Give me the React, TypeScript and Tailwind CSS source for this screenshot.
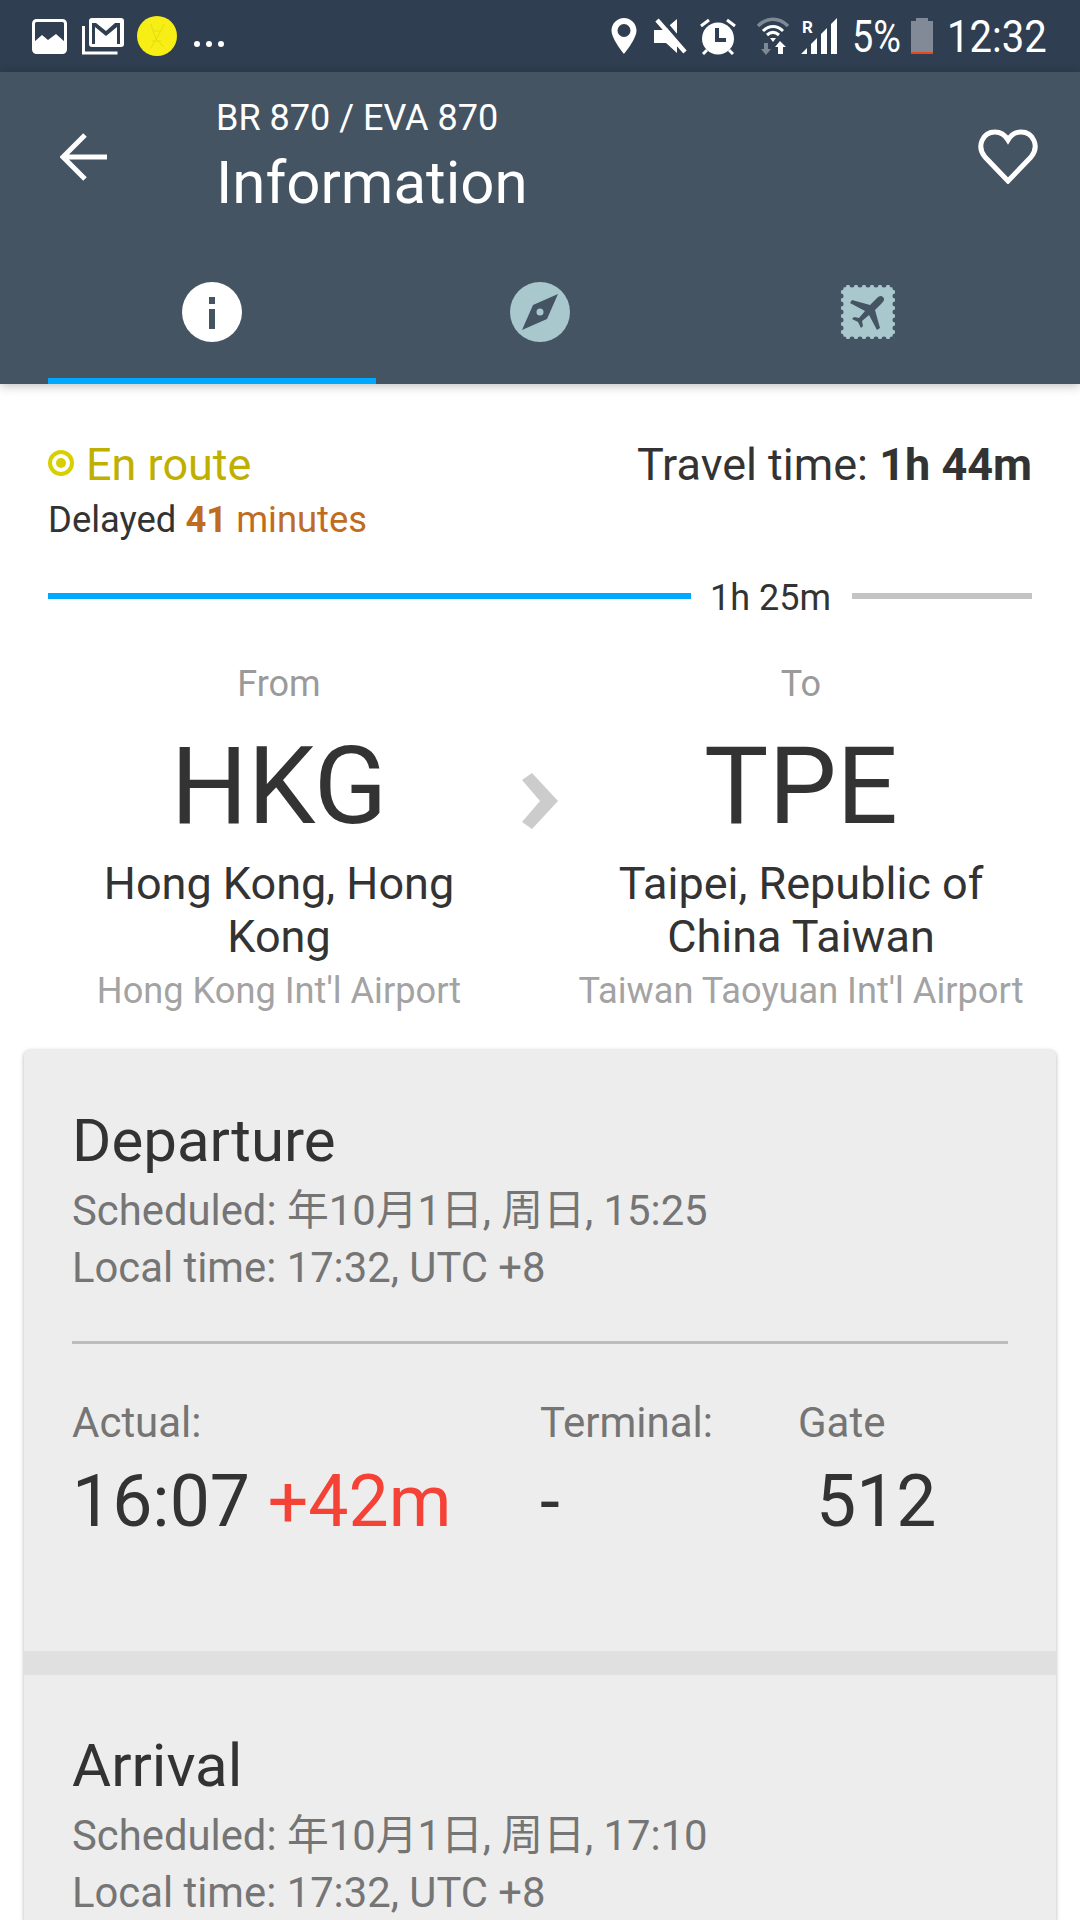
import { ReactNode } from 'react';

const ImageIcon = () => (
    <svg width="35" height="35" viewBox="0 0 35 35">
        <rect x="1.5" y="1.5" width="32" height="32" rx="3" fill="none" stroke="white" strokeWidth="3" />
        <path d="M2 34V23l8-7 6 5 8-6 9 8v11z" fill="white" />
    </svg>
);

const GmailStack = () => (
    <svg width="42" height="37" viewBox="0 0 42 37">
        <path d="M1.500 8v27h34" fill="none" stroke="white" strokeWidth="3" />
        <rect x="7" y="0" width="35" height="29" rx="3" fill="white" />
        <path d="M10 5v21h3V9l11 9 11-9v17h3V5h-5L24 13 14 5z" fill="#2f3e50" />
    </svg>
);

const Coin = () => (
    <svg width="40" height="40" viewBox="0 0 40 40">
        <circle cx="20" cy="20" r="20" fill="#f7ee16" />
        <path d="M14 8l2 7h8l3-7M16 15l3 8-5 9M24 15l-5 8 8 8M15 25h9" fill="none" stroke="#e6dc14" strokeWidth="1" />
    </svg>
);

const Pin = () => (
    <svg width="26" height="36" viewBox="0 0 25 36">
        <path fillRule="evenodd" d="M12.5 0C5.6 0 0 5.6 0 12.5 0 21 12.5 36 12.5 36S25 21 25 12.5C25 5.6 19.4 0 12.5 0zm0 6a6.5 6.5 0 1 1 0 13 6.500 6.500 0 0 1 0-13z" fill="white" />
    </svg>
);

const Mute = () => (
    <svg width="33" height="36" viewBox="0 0 33 36">
        <path d="M0 12h10L23 1v34L12 25H0z" fill="white" />
        <path d="M7 0l28 33" stroke="#2f3e50" strokeWidth="4" />
        <path d="M3 2l28 32" stroke="white" strokeWidth="4.500" />
    </svg>
);

const Alarm = () => (
    <svg width="36" height="37" viewBox="0 0 36 37">
        <circle cx="18" cy="20.500" r="16" fill="white" />
        <path d="M15 10h4v10h7v4H15z" fill="#2f3e50" />
        <path d="M1 8l8-6M35 8l-8-6M3 36l4-4M33 36l-4-4" stroke="white" strokeWidth="3" />
    </svg>
);

const Wifi = () => (
    <svg width="32" height="38" viewBox="0 0 32 38">
        <path d="M1 9C10 0 22 0 31 9" fill="none" stroke="#7f8995" strokeWidth="3.500" />
        <path d="M6 14c6-6 14-6 20 0M10 18c4-3.500 8-3.500 12 0" fill="none" stroke="white" strokeWidth="3" />
        <path d="M13 21h6l-3 4z" fill="white" />
        <path d="M7 26h4v6h3l-5 6-5-6h3z" fill="#7f8995" />
        <path d="M23 24l6 6h-3v7h-5v-7h-3z" fill="white" />
    </svg>
);

const Signal = () => (
    <svg width="36" height="37" viewBox="0 0 36 37">
        <path d="M0 36l6-6v6zM10 36V26l6-6v16zM20 36V16l6-6v26zM30 36V6l6-6v36z" fill="white" />
    </svg>
);

const Battery = () => (
    <div className="flex flex-col items-center w-[22px] h-[36px]">
        <div className="w-[12px] h-[3px] bg-[#828a97]" />
        <div className="w-[22px] flex-1 bg-[#828a97]" />
        <div className="w-[22px] h-[2px] bg-[#e8481c]" />
    </div>
);

const BackArrow = () => (
    <svg width="48" height="48" viewBox="0 0 48 48">
        <path d="M47 24H3M25 2L3 24l22 22" fill="none" stroke="white" strokeWidth="5" />
    </svg>
);

const Heart = () => (
    <svg width="60" height="55" viewBox="0 0 60 55">
        <path d="M30 52L7 28C-2 17 5 3 17 3c6 0 10 3 13 8 3-5 7-8 13-8 12 0 19 14 10 25z" fill="none" stroke="white" strokeWidth="5" />
    </svg>
);

const InfoTab = () => (
    <svg width="60" height="60" viewBox="0 0 60 60">
        <circle cx="30" cy="30" r="30" fill="white" />
        <path d="M27 15h6v7h-6zM27 27h6v20h-6z" fill="#445463" />
    </svg>
);

const CompassTab = () => (
    <svg width="60" height="60" viewBox="0 0 60 60">
        <circle cx="30" cy="30" r="30" fill="#a9c8cd" />
        <path fillRule="evenodd" d="M48 12L37 37 12 48l11-25zM30 26.500a3.500 3.500 0 1 0 0 7 3.500 3.500 0 0 0 0-7z" fill="#445463" />
    </svg>
);

const StampTab = () => (
    <svg width="54" height="54" viewBox="0 0 54 54">
        <rect width="54" height="54" rx="2" fill="#a9c8cd" />
        <g fill="#445463">
            {[0, 1, 2, 3, 4, 5, 6].map((i) => (
                <g key={i}>
                    <circle cx={3 + i * 8} cy="0" r="2.500" />
                    <circle cx={3 + i * 8} cy="54" r="2.500" />
                    <circle cx="0" cy={3 + i * 8} r="2.500" />
                    <circle cx="54" cy={3 + i * 8} r="2.500" />
                </g>
            ))}
        </g>
        <path d="M42 12c-2-2-4-1-6 1l-7 7-18-5-2 3 15 8-6 7-5-1-2 2 6 3 3 6 2-2-1-5 7-6 8 15 3-2-5-18 7-7c2-2 3-4 1-6z" fill="#445463" />
    </svg>
);

const StatusBar = () => (
    <div className="h-[72px] bg-[#2f3e50] flex items-center pl-[32px] pr-[35px] text-white">
        <ImageIcon />
        <div className="ml-[15px]"><GmailStack /></div>
        <div className="ml-[13px]"><Coin /></div>
        <div className="ml-[17px] mt-[16px] flex gap-[6px]">
            <span className="w-[6px] h-[6px] rounded-full bg-white" />
            <span className="w-[6px] h-[6px] rounded-full bg-white" />
            <span className="w-[6px] h-[6px] rounded-full bg-white" />
        </div>
        <div className="ml-auto flex items-center">
            <Pin />
            <div className="ml-[17px]"><Mute /></div>
            <div className="ml-[13px]"><Alarm /></div>
            <div className="ml-[21px]"><Wifi /></div>
            <div className="ml-[12px] relative">
                <Signal />
                <span className="absolute left-[1px] top-[-1px] text-[17px] font-bold leading-[20px]">R</span>
            </div>
            <span className="ml-[15px] w-[49px] text-[44px] leading-[48px] whitespace-nowrap scale-x-[0.86] origin-left translate-y-[1px]">5%</span>
            <div className="ml-[10px]"><Battery /></div>
            <span className="ml-[14px] w-[98px] text-[45px] leading-[48px] whitespace-nowrap scale-x-[0.89] origin-left translate-y-[1px]">12:32</span>
        </div>
    </div>
);

const Header = () => (
    <div className="relative z-10 h-[312px] bg-[#445463] flex flex-col shadow-[0_2px_10px_rgba(0,0,0,0.25)] text-white">
        <div className="flex pl-[60px] pr-[42px] pt-[24px]">
            <div className="mt-[37px]"><BackArrow /></div>
            <div className="ml-[108px] flex flex-col">
                <span className="text-[36px] leading-[44px]">BR 870 / EVA 870</span>
                <span className="mt-[7px] text-[60px] leading-[72px]">Information</span>
            </div>
            <div className="ml-auto mt-[33px]"><Heart /></div>
        </div>
        <div className="mt-auto mx-12 flex h-[134px]">
            <div className="flex-1 flex items-center justify-center border-b-[6px] border-[#00a8ff] pb-[4px]">
                <InfoTab />
            </div>
            <div className="flex-1 flex items-center justify-center pb-[10px]">
                <CompassTab />
            </div>
            <div className="flex-1 flex items-center justify-center pb-[10px]">
                <StampTab />
            </div>
        </div>
    </div>
);

const Airport = ({ label, code, city, name }: { label: string; code: string; city: ReactNode; name: string }) => (
    <div className="w-[462px] flex flex-col items-center text-center">
        <span className="text-[36px] leading-[40px] text-[#9a9a9a]">{label}</span>
        <span className="mt-[18px] text-[108px] leading-[128px] text-[#333333]">{code}</span>
        <span className="mt-[7px] text-[45px] leading-[53px] text-[#333333]">{city}</span>
        <span className="mt-[8px] text-[36.2px] leading-[40px] text-[#a3a3a3] whitespace-nowrap">{name}</span>
    </div>
);

const Times = ({ title, time }: { title: string; time: string }) => (
    <>
        <div className="text-[60px] leading-[68px] text-[#333333]">{title}</div>
        <div className="mt-[7px] text-[41.8px] leading-[57px] text-[#757575]">Scheduled: 年10月1日, 周日, {time}</div>
        <div className="text-[41.8px] leading-[57px] text-[#757575]">Local time: 17:32, UTC +8</div>
    </>
);

export default function App() {
    return (
        <div className="h-[1920px] w-[1080px] overflow-hidden bg-white font-['Roboto','Noto_Sans_CJK_SC',sans-serif]">
            <StatusBar />
            <Header />

            {/* Status and route */}
            <div className="px-12 pt-[56px]">
                <div className="flex justify-between">
                    <div className="flex items-center">
                        <span className="w-[26px] h-[26px] rounded-full border-[4px] border-[#d8cf00] flex items-center justify-center mt-[-4px]">
                            <span className="w-[10px] h-[10px] rounded-full bg-[#d8cf00]" />
                        </span>
                        <span className="ml-[12px] text-[45px] leading-[50px] text-[#bfb000]">En route</span>
                    </div>
                    <div className="text-[45px] leading-[50px] text-[#333333]">
                        Travel time: <span className="font-bold">1h 44m</span>
                    </div>
                </div>
                <div className="mt-[9px] text-[36.4px] leading-[42px] text-[#333333]">
                    Delayed <span className="font-bold text-[#c06c20]">41</span> <span className="text-[#c06c20]">minutes</span>
                </div>

                <div className="mt-[35px] flex items-center">
                    <div className="w-[643px] h-[6px] bg-[#00a8ff]" />
                    <span className="ml-[19px] text-[36px] leading-[40px] text-[#333333] w-[122px] whitespace-nowrap translate-y-[2px]">1h 25m</span>
                    <div className="ml-[20px] flex-1 h-[6px] bg-[#c4c4c4]" />
                </div>

                <div className="mt-[48px] flex">
                    <Airport label="From" code="HKG" city={<>Hong Kong, Hong<br />Kong</>} name="Hong Kong Int'l Airport" />
                    <div className="w-[60px] flex justify-center pt-[109px]">
                        <svg width="36" height="56" viewBox="0 0 36 56">
                            <path d="M0 7l10-7 26 28-26 28-10-7 18-21z" fill="#cccccc" />
                        </svg>
                    </div>
                    <Airport label="To" code="TPE" city={<>Taipei, Republic of<br />China Taiwan</>} name="Taiwan Taoyuan Int'l Airport" />
                </div>
            </div>

            {/* Departure and arrival card */}
            <div className="mt-[39px] mx-6 rounded-t-[6px] bg-[#ededed] shadow-[0_1px_4px_rgba(0,0,0,0.3)]">
                <div className="h-[601px] px-12 pt-[57px]">
                    <Times title="Departure" time="15:25" />
                    <div className="mt-[45px] h-[3px] bg-[#bdbdbd]" />
                    <div className="mt-[56px] flex">
                        <div className="w-[468px]">
                            <div className="text-[42px] leading-[46px] text-[#757575]">Actual:</div>
                            <div className="mt-[13px] text-[71.5px] leading-[86px] text-[#333333]">
                                16:07 <span className="text-[#f44336]">+42m</span>
                            </div>
                        </div>
                        <div className="w-[258px]">
                            <div className="text-[42px] leading-[46px] text-[#757575]">Terminal:</div>
                            <div className="mt-[13px] text-[71.5px] leading-[86px] text-[#333333]">-</div>
                        </div>
                        <div>
                            <div className="text-[42px] leading-[46px] text-[#757575]">Gate</div>
                            <div className="mt-[13px] pl-[18px] text-[71.5px] leading-[86px] text-[#333333]">512</div>
                        </div>
                    </div>
                </div>
                <div className="h-[24px] bg-[#e0e0e0]" />
                <div className="px-12 pt-[57px]">
                    <Times title="Arrival" time="17:10" />
                </div>
            </div>
        </div>
    );
}
